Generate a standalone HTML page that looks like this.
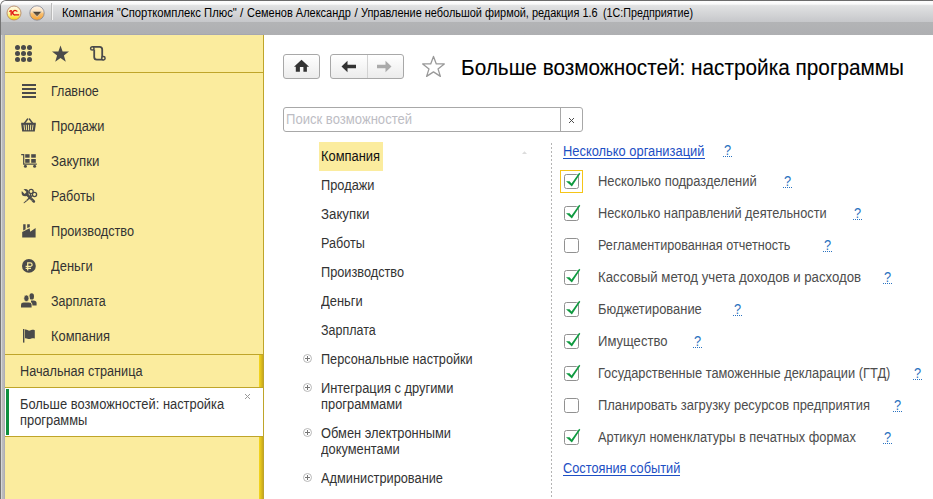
<!DOCTYPE html>
<html><head><meta charset="utf-8">
<style>
*{margin:0;padding:0;box-sizing:border-box}
html,body{width:933px;height:499px;overflow:hidden;background:#fff}
body{position:relative;font-family:"Liberation Sans",sans-serif;font-size:13px;color:#333}
.a{position:absolute;white-space:nowrap}
#win{position:absolute;left:0;top:0;width:940px;height:510px;border-top-left-radius:6px;border-left:1px solid #747474;border-top:1px solid #6c6c6c;overflow:hidden;
 background:linear-gradient(90deg,#d6d6d6 0,#d6d6d6 1px,#bdbdbd 1px,#b8b8b8 3px,#aeaeb6 3px,#aeaeb6 4px,transparent 4px)}
#tb{position:absolute;left:0;top:0;width:940px;height:34px;
 background:linear-gradient(#fdfdfd 0,#fbfbfb 3px,#e1e2e3 4.6px,#c6c7ca 21px,#b3b4b6 21px,#aeafb2 34px)}
.ttl{font-size:12px;color:#000;transform:scaleX(.917);transform-origin:0 0}
#side{position:absolute;left:5px;top:35px;width:259px;height:464px;background:#fbec9e;border-right:1px solid #bfa52a}
.gl{position:absolute;left:5px;width:258px;height:1px;background:#bfa52a}
.t{position:absolute;white-space:nowrap;font-size:14px;line-height:16px;transform:scaleX(.915);transform-origin:0 0}
.menu{left:51px;color:#333}
.ic{position:absolute;overflow:visible}
.tree{left:321px;color:#333}
.plus{position:absolute;left:303px;width:9px;height:9px;border:1px solid #b8b8b8;border-radius:50%}
.plus:before{content:"";position:absolute;left:1px;top:3px;width:5px;height:1px;background:#777}
.plus:after{content:"";position:absolute;left:3px;top:1px;width:1px;height:5px;background:#777}
.cb{position:absolute;left:564px;width:15px;height:15px;border:1px solid #919191;border-radius:2.5px;background:#fff}
.lbl{left:598px;color:#4d4d4d}
.q{color:#2a72c0}
.dots{position:absolute;height:1px;width:10px;background:repeating-linear-gradient(90deg,#2a72c0 0,#2a72c0 1px,transparent 1px,transparent 2px)}
.lnk{color:#1d4fc4}
.ul{position:absolute;height:1px;background:#1d4fc4}
</style></head><body>
<div id="win"><div id="tb"></div></div>
<svg class="ic" style="left:6px;top:5px" width="16" height="16" viewBox="0 0 16 16">
 <defs><linearGradient id="lg1" x1="0" y1="0" x2="0" y2="1"><stop offset="0" stop-color="#fffbe8"/><stop offset="0.55" stop-color="#fff3a0"/><stop offset="1" stop-color="#f5d800"/></linearGradient></defs>
 <circle cx="8" cy="8" r="7" fill="url(#lg1)" stroke="#b88a6a" stroke-width="0.9"/>
 <path d="M3 6 L4.8 4.9 L5.8 4.9 L5.8 10.6 L4.5 10.6 L4.5 6.6 L3.4 7.1 Z" fill="#e01010"/>
 <path d="M10.8 5.6 A2.9 2.9 0 1 0 9.2 10.6 L13.2 10.6 L13.2 9.3 L9.2 9.3 A1.6 1.6 0 1 1 10.2 6.6 L11.2 6.9 L11.6 6.1 Z" fill="#e01010"/>
</svg>
<svg class="ic" style="left:29px;top:5px" width="16" height="16" viewBox="0 0 16 16">
 <defs><linearGradient id="lg2" x1="0" y1="0" x2="0" y2="1"><stop offset="0" stop-color="#fff6ea"/><stop offset="0.42" stop-color="#fde0b8"/><stop offset="0.55" stop-color="#f9bf70"/><stop offset="1" stop-color="#f4a030"/></linearGradient>
 <linearGradient id="lg3" x1="0" y1="0" x2="0" y2="1"><stop offset="0" stop-color="#3e3830"/><stop offset="1" stop-color="#8a7050"/></linearGradient></defs>
 <circle cx="8" cy="8" r="7.2" fill="url(#lg2)" stroke="#7c8090" stroke-width="0.75"/>
 <path d="M3.3 6.4 L12.8 6.4 L8.05 11.9 Z" fill="url(#lg3)" stroke="#fff4e0" stroke-width="0.5"/>
</svg>
<div class="a" style="left:51px;top:3px;width:1px;height:17px;background:#bababa"></div>
<div class="a" style="left:52px;top:3px;width:1px;height:17px;background:#f4f4f4"></div>
<div class="a ttl" style="left:61.8px;top:6px;transform:scaleX(0.938)">Компания "Спорткомплекс Плюс"</div>
<div class="a ttl" style="left:240px;top:6px;transform:scaleX(1)">/</div>
<div class="a ttl" style="left:246.68px;top:6px;transform:scaleX(0.9161)">Семенов Александр</div>
<div class="a ttl" style="left:354.5px;top:6px;transform:scaleX(1)">/</div>
<div class="a ttl" style="left:361.09px;top:6px;transform:scaleX(0.9109)">Управление небольшой фирмой, редакция 1.6</div>
<div class="a ttl" style="left:603.01px;top:6px;transform:scaleX(0.8949)">(1С:Предприятие)</div>
<div id="side"></div>
<div class="a" style="left:4px;top:34px;width:260px;height:1px;background:#a6a7b0"></div>
<div class="gl" style="top:72px"></div>
<div class="gl" style="top:354px"></div>
<div class="gl" style="top:387px"></div>
<div class="gl" style="top:436px"></div>
<div class="a" style="left:259px;top:355px;width:4px;height:32px;background:linear-gradient(90deg,#f6d81c,#c8a820)"></div>
<div class="a" style="left:259px;top:437px;width:4px;height:62px;background:linear-gradient(90deg,#f6d81c,#c8a820)"></div>
<div class="a" style="left:5px;top:388px;width:258px;height:48px;background:#fff"></div>
<div class="a" style="left:6px;top:389px;width:3px;height:46px;background:#0d8f3e"></div>
<svg class="ic" style="left:15px;top:45px" width="17" height="17" viewBox="0 0 17 17" fill="#4a4a4a"><circle cx="2.5" cy="2.5" r="2.5"/><circle cx="8.5" cy="2.5" r="2.5"/><circle cx="14.5" cy="2.5" r="2.5"/><circle cx="2.5" cy="8.5" r="2.5"/><circle cx="8.5" cy="8.5" r="2.5"/><circle cx="14.5" cy="8.5" r="2.5"/><circle cx="2.5" cy="14.5" r="2.5"/><circle cx="8.5" cy="14.5" r="2.5"/><circle cx="14.5" cy="14.5" r="2.5"/></svg>
<svg class="ic" style="left:51px;top:45px" width="19" height="18" viewBox="0 0 19 18" fill="#4a4a4a">
 <path d="M9.5 0.5 L11.6 6.4 L18 6.6 L12.9 10.5 L14.8 16.8 L9.5 13 L4.2 16.8 L6.1 10.5 L1 6.6 L7.4 6.4 Z"/></svg>
<svg class="ic" style="left:86px;top:43px" width="24" height="21" viewBox="0 0 24 21" fill="none" stroke="#4a4a4a" stroke-width="1.8">
 <path d="M6.3 3.8 L13.6 3.8 Q16.2 3.8 16.2 6.4 L16.2 15.4"/>
 <path d="M8.2 6.5 L8.2 14 Q8.2 16.6 10.8 16.6 L17.5 16.6"/>
 <circle cx="6.3" cy="5.4" r="1.7" fill="#fbec9e" stroke-width="1.5"/>
 <circle cx="17.4" cy="15.2" r="1.7" fill="#fbec9e" stroke-width="1.5"/>
</svg>
<svg class="ic" style="left:22px;top:84px" width="14" height="14" viewBox="0 0 14 14" fill="#4a4a4a"><rect x="0" y="0" width="14" height="2"/><rect x="0" y="4" width="14" height="2"/><rect x="0" y="8" width="14" height="2"/><rect x="0" y="12" width="14" height="2"/></svg>
<svg class="ic" style="left:19px;top:115px" width="20" height="20" viewBox="0 0 20 20">
 <path d="M5.6 8 L8.6 4 M13.4 8 L10.4 4" stroke="#4a4a4a" stroke-width="1.4" stroke-linecap="round"/>
 <path d="M2.2 7.8 L16.8 7.8 L16.8 9.2 L15.8 16.6 L3.2 16.6 L2.2 9.2 Z" fill="#4a4a4a"/>
 <path d="M5 9.8 L5.7 15.2 M7.3 9.8 L7.6 15.2 M9.5 9.8 L9.5 15.2 M11.7 9.8 L11.4 15.2 M14 9.8 L13.3 15.2" stroke="#fbec9e" stroke-width="0.9"/>
</svg>
<svg class="ic" style="left:19px;top:150px" width="20" height="20" viewBox="0 0 20 20" fill="#4a4a4a">
 <path d="M2.2 4.6 L4.7 4.6 L4.7 14.2 L17.8 14.2" stroke="#4a4a4a" stroke-width="1.2" fill="none"/>
 <rect x="6.2" y="4.2" width="4.4" height="3.5"/><rect x="12.2" y="4.2" width="4.6" height="3.5"/>
 <rect x="6.2" y="9" width="4.4" height="3.8"/><rect x="12.2" y="9" width="4.6" height="3.8"/>
 <circle cx="6.4" cy="16.3" r="1.5"/><circle cx="15.6" cy="16.3" r="1.5"/>
</svg>
<svg class="ic" style="left:19px;top:186px" width="20" height="20" viewBox="0 0 20 20" fill="#4a4a4a">
 <path d="M7 7.6 L14.9 15.5" stroke="#4a4a4a" stroke-width="2.5" stroke-linecap="round"/>
 <circle cx="6.2" cy="6.7" r="3.6"/>
 <path d="M7.5 6.1 L5.7 7.9 L1.3 3.5 L3.1 1.7 Z" fill="#fbec9e"/>
 <path d="M11 10.2 L12.6 11.6 L5.2 17.2 L4.4 16.9 Z"/>
 <circle cx="12.1" cy="5.5" r="2.1" fill="none" stroke="#4a4a4a" stroke-width="1.3"/>
 <circle cx="15.5" cy="8.5" r="2.1" fill="none" stroke="#4a4a4a" stroke-width="1.3"/>
 <path d="M11.2 7.3 L11.6 10.4 M13.4 9.5 L12 10.8" stroke="#4a4a4a" stroke-width="1.2"/>
 <path d="M12 12.6 L11.1 13.5 M13.4 14 L12.5 14.9 M9.2 13.4 L8.4 12.6 M7.6 14.6 L6.8 13.8" stroke="#fbec9e" stroke-width="0.55"/>
</svg>
<svg class="ic" style="left:19px;top:221px" width="20" height="20" viewBox="0 0 20 20" fill="#4a4a4a">
 <path d="M4.2 3.2 L6.6 3.2 L6.6 8.2 L4.2 9.4 Z"/>
 <path d="M8.2 3.2 L10.8 3.2 L10.8 5.9 L8.2 7.1 Z"/>
 <path d="M3.2 11 L10.6 7.2 L11.2 10.8 L16.6 7 L16.6 16.6 L3.2 16.6 Z"/>
</svg>
<svg class="ic" style="left:19px;top:256px" width="20" height="20" viewBox="0 0 20 20">
 <circle cx="9.9" cy="9.9" r="6.9" fill="#4a4a4a"/>
 <path d="M8.7 14.6 L8.7 6.9 L11.2 6.9 A1.9 1.75 0 0 1 11.2 10.4 L6.6 10.4 M6.6 12.4 L12 12.4" stroke="#fbec9e" stroke-width="1.25" fill="none"/>
</svg>
<svg class="ic" style="left:19px;top:291px" width="20" height="20" viewBox="0 0 20 20" fill="#4a4a4a">
 <ellipse cx="12.7" cy="5.4" rx="2.3" ry="3.2"/>
 <path d="M12 9.6 L14.5 9.6 Q17.6 9.9 17.6 12 L17.6 14.6 L12 14.6 Z"/>
 <path d="M2 16.6 L2 13.8 Q2 11.6 4.6 11.6 L10 11.6 Q12.6 11.6 12.6 13.8 L12.6 16.6 Z" fill="#fbec9e" stroke="#fbec9e" stroke-width="1.6"/>
 <ellipse cx="7.4" cy="7.3" rx="2.4" ry="3.3" fill="#fbec9e" stroke="#fbec9e" stroke-width="1.6"/>
 <path d="M2 16.6 L2 13.8 Q2 11.6 4.6 11.6 L10 11.6 Q12.6 11.6 12.6 13.8 L12.6 16.6 Z"/>
 <ellipse cx="7.4" cy="7.3" rx="2.5" ry="3.3" stroke="#fbec9e" stroke-width="0.6"/>
</svg>
<svg class="ic" style="left:19px;top:326px" width="20" height="20" viewBox="0 0 20 20" fill="#4a4a4a">
 <rect x="4" y="3" width="1.4" height="13.6"/>
 <path d="M6 3.6 C8 3.2 9 5 11 4.6 C12.5 4.3 13 3.2 15.8 4.2 L15.8 12.6 C13 11.6 12.5 12.8 11 13 C9 13.4 8 11.8 6 12.2 Z"/>
</svg>
<div class="t menu" style="left:51px;top:83px;transform:scaleX(0.894);">Главное</div>
<div class="t menu" style="left:51px;top:118px;transform:scaleX(0.9155);">Продажи</div>
<div class="t menu" style="left:51px;top:153px;transform:scaleX(0.947);">Закупки</div>
<div class="t menu" style="left:51px;top:188px;transform:scaleX(0.902);">Работы</div>
<div class="t menu" style="left:51px;top:223px;transform:scaleX(0.91);">Производство</div>
<div class="t menu" style="left:51px;top:258px;transform:scaleX(0.92);">Деньги</div>
<div class="t menu" style="left:51px;top:293px;transform:scaleX(0.892);">Зарплата</div>
<div class="t menu" style="left:51px;top:328px;transform:scaleX(0.922);">Компания</div>
<div class="t " style="left:20px;top:363px;transform:scaleX(0.904);color:#333">Начальная страница</div>
<div class="t " style="left:20px;top:396px;transform:scaleX(0.921);color:#333">Больше возможностей: настройка<br>программы</div>
<svg class="ic" style="left:244px;top:393px" width="7" height="7" viewBox="0 0 7 7"><path d="M1 1 L6 6 M6 1 L1 6" stroke="#9a9a9a" stroke-width="1"/></svg>
<div class="a" style="left:283px;top:54px;width:37px;height:25px;border:1px solid #a8a8a8;border-radius:3px;background:linear-gradient(#fff,#ececec)"></div>
<svg class="ic" style="left:294px;top:59px" width="16" height="14" viewBox="0 0 16 14" fill="#333"><path d="M7.5 0.8 L15.1 7.8 L12.9 7.8 L12.9 12.8 L9.4 12.8 L9.4 8 L5.9 8 L5.9 12.8 L1.8 12.8 L1.8 7.8 L0 7.8 Z"/></svg>
<div class="a" style="left:330px;top:54px;width:74px;height:25px;border:1px solid #a8a8a8;border-radius:3px;background:linear-gradient(#fff,#ececec)"></div>
<div class="a" style="left:367px;top:55px;width:1px;height:23px;background:#d2d2d2"></div>
<svg class="ic" style="left:341px;top:60px" width="16" height="13" viewBox="0 0 16 13" fill="#333"><path d="M0.5 6.5 L6.5 0.8 L6.5 4.8 L15 4.8 L15 8.2 L6.5 8.2 L6.5 12.2 Z"/></svg>
<svg class="ic" style="left:376px;top:60px" width="16" height="13" viewBox="0 0 16 13" fill="#aaa"><path d="M15.5 6.5 L9.5 0.8 L9.5 4.8 L1 4.8 L1 8.2 L9.5 8.2 L9.5 12.2 Z"/></svg>
<svg class="ic" style="left:421px;top:54px" width="25" height="24" viewBox="0 0 25 24" fill="none" stroke="#999" stroke-width="1.3"><path d="M12.5 2.4 L15.3 9.9 L23.3 9.9 L17 14.9 L19.4 22.4 L12.5 17.9 L5.6 22.4 L8 14.9 L1.7 9.9 L9.7 9.9 Z" stroke-linejoin="round"/></svg>
<div class="a" style="left:461px;top:55px;font-size:21.8px;color:#000;-webkit-text-stroke:0.12px #000;transform:scaleX(.9526);transform-origin:0 0">Больше возможностей: настройка программы</div>
<div class="a" style="left:283px;top:107px;width:300px;height:25px;border:1px solid #a8a8a8;border-radius:3px;background:#fff"></div>
<div class="a" style="left:560px;top:108px;width:1px;height:23px;background:#a8a8a8"></div>
<div class="t " style="left:286px;top:111px;transform:scaleX(0.934);color:#bdbdc4">Поиск возможностей</div>
<svg class="ic" style="left:568px;top:117px" width="7" height="7" viewBox="0 0 7 7"><path d="M1 1 L6 6 M6 1 L1 6" stroke="#444" stroke-width="0.95"/></svg>
<div class="a" style="left:319px;top:142px;width:64px;height:29px;background:#fbec9e"></div>
<div class="t tree" style="left:321px;top:148px;transform:scaleX(0.922);color:#111">Компания</div>
<div class="t tree" style="left:321px;top:177px;transform:scaleX(0.9155);">Продажи</div>
<div class="t tree" style="left:321px;top:206px;transform:scaleX(0.947);">Закупки</div>
<div class="t tree" style="left:321px;top:235px;transform:scaleX(0.902);">Работы</div>
<div class="t tree" style="left:321px;top:264px;transform:scaleX(0.91);">Производство</div>
<div class="t tree" style="left:321px;top:293px;transform:scaleX(0.92);">Деньги</div>
<div class="t tree" style="left:321px;top:322px;transform:scaleX(0.892);">Зарплата</div>
<div class="plus" style="top:354px"></div>
<div class="t tree" style="left:321px;top:351px;transform:scaleX(0.9066);">Персональные настройки</div>
<div class="plus" style="top:383px"></div>
<div class="t tree" style="left:321px;top:380px;transform:scaleX(0.92);">Интеграция с другими<br>программами</div>
<div class="plus" style="top:428px"></div>
<div class="t tree" style="left:321px;top:425px;transform:scaleX(0.918);">Обмен электронными<br>документами</div>
<div class="plus" style="top:473px"></div>
<div class="t tree" style="left:321px;top:470px;transform:scaleX(0.9135);">Администрирование</div>
<svg class="ic" style="left:522px;top:151px" width="5" height="3" viewBox="0 0 5 3"><path d="M0 3 L2.5 0.3 L5 3 Z" fill="#dcdcdc"/></svg>
<div class="a" style="left:551px;top:143px;width:1px;height:356px;background:repeating-linear-gradient(#b4b4b4 0,#b4b4b4 2px,transparent 2px,transparent 4px)"></div>
<div class="t lnk" style="left:563px;top:143px;transform:scaleX(0.9203);">Несколько организаций</div>
<div class="ul" style="left:563px;top:158px;width:142px"></div>
<div class="t q" style="left:724px;top:142px">?</div>
<div class="dots" style="left:723px;top:156px"></div>
<div class="a" style="left:560px;top:170px;width:23px;height:23px;border:1px solid #f5c518"></div>
<div class="cb" style="top:174px"></div>
<svg class="ic" style="left:564px;top:172px" width="17" height="17" viewBox="0 -2 17 17"><path d="M2 7.3 L5.6 7.3 L7.5 9.4 L15.2 -1.2 L16.3 -0.3 L7.9 12.6 Z" fill="#0f9a40"/></svg>
<div class="t lbl" style="left:598px;top:173px;transform:scaleX(0.9246);">Несколько подразделений</div>
<div class="t q" style="left:784px;top:173px">?</div>
<div class="dots" style="left:783px;top:187px"></div>
<div class="cb" style="top:206px"></div>
<svg class="ic" style="left:564px;top:204px" width="17" height="17" viewBox="0 -2 17 17"><path d="M2 7.3 L5.6 7.3 L7.5 9.4 L15.2 -1.2 L16.3 -0.3 L7.9 12.6 Z" fill="#0f9a40"/></svg>
<div class="t lbl" style="left:598px;top:205px;transform:scaleX(0.9132);">Несколько направлений деятельности</div>
<div class="t q" style="left:854px;top:205px">?</div>
<div class="dots" style="left:853px;top:219px"></div>
<div class="cb" style="top:238px"></div>
<div class="t lbl" style="left:598px;top:237px;transform:scaleX(0.9028);">Регламентированная отчетность</div>
<div class="t q" style="left:824px;top:237px">?</div>
<div class="dots" style="left:823px;top:251px"></div>
<div class="cb" style="top:270px"></div>
<svg class="ic" style="left:564px;top:268px" width="17" height="17" viewBox="0 -2 17 17"><path d="M2 7.3 L5.6 7.3 L7.5 9.4 L15.2 -1.2 L16.3 -0.3 L7.9 12.6 Z" fill="#0f9a40"/></svg>
<div class="t lbl" style="left:598px;top:269px;transform:scaleX(0.9439);">Кассовый метод учета доходов и расходов</div>
<div class="t q" style="left:884px;top:269px">?</div>
<div class="dots" style="left:883px;top:283px"></div>
<div class="cb" style="top:302px"></div>
<svg class="ic" style="left:564px;top:300px" width="17" height="17" viewBox="0 -2 17 17"><path d="M2 7.3 L5.6 7.3 L7.5 9.4 L15.2 -1.2 L16.3 -0.3 L7.9 12.6 Z" fill="#0f9a40"/></svg>
<div class="t lbl" style="left:598px;top:301px;transform:scaleX(0.9232);">Бюджетирование</div>
<div class="t q" style="left:734px;top:301px">?</div>
<div class="dots" style="left:733px;top:315px"></div>
<div class="cb" style="top:334px"></div>
<svg class="ic" style="left:564px;top:332px" width="17" height="17" viewBox="0 -2 17 17"><path d="M2 7.3 L5.6 7.3 L7.5 9.4 L15.2 -1.2 L16.3 -0.3 L7.9 12.6 Z" fill="#0f9a40"/></svg>
<div class="t lbl" style="left:598px;top:333px;transform:scaleX(0.9324);">Имущество</div>
<div class="t q" style="left:694px;top:333px">?</div>
<div class="dots" style="left:693px;top:347px"></div>
<div class="cb" style="top:366px"></div>
<svg class="ic" style="left:564px;top:364px" width="17" height="17" viewBox="0 -2 17 17"><path d="M2 7.3 L5.6 7.3 L7.5 9.4 L15.2 -1.2 L16.3 -0.3 L7.9 12.6 Z" fill="#0f9a40"/></svg>
<div class="t lbl" style="left:598px;top:365px;transform:scaleX(0.917);">Государственные таможенные декларации (ГТД)</div>
<div class="t q" style="left:914px;top:365px">?</div>
<div class="dots" style="left:913px;top:379px"></div>
<div class="cb" style="top:398px"></div>
<div class="t lbl" style="left:598px;top:397px;transform:scaleX(0.9246);">Планировать загрузку ресурсов предприятия</div>
<div class="t q" style="left:894px;top:397px">?</div>
<div class="dots" style="left:893px;top:411px"></div>
<div class="cb" style="top:430px"></div>
<svg class="ic" style="left:564px;top:428px" width="17" height="17" viewBox="0 -2 17 17"><path d="M2 7.3 L5.6 7.3 L7.5 9.4 L15.2 -1.2 L16.3 -0.3 L7.9 12.6 Z" fill="#0f9a40"/></svg>
<div class="t lbl" style="left:598px;top:429px;transform:scaleX(0.9164);">Артикул номенклатуры в печатных формах</div>
<div class="t q" style="left:884px;top:429px">?</div>
<div class="dots" style="left:883px;top:443px"></div>
<div class="t lnk" style="left:563px;top:460px;transform:scaleX(0.9117);">Состояния событий</div>
<div class="ul" style="left:563px;top:475px;width:117px"></div>
</body></html>
